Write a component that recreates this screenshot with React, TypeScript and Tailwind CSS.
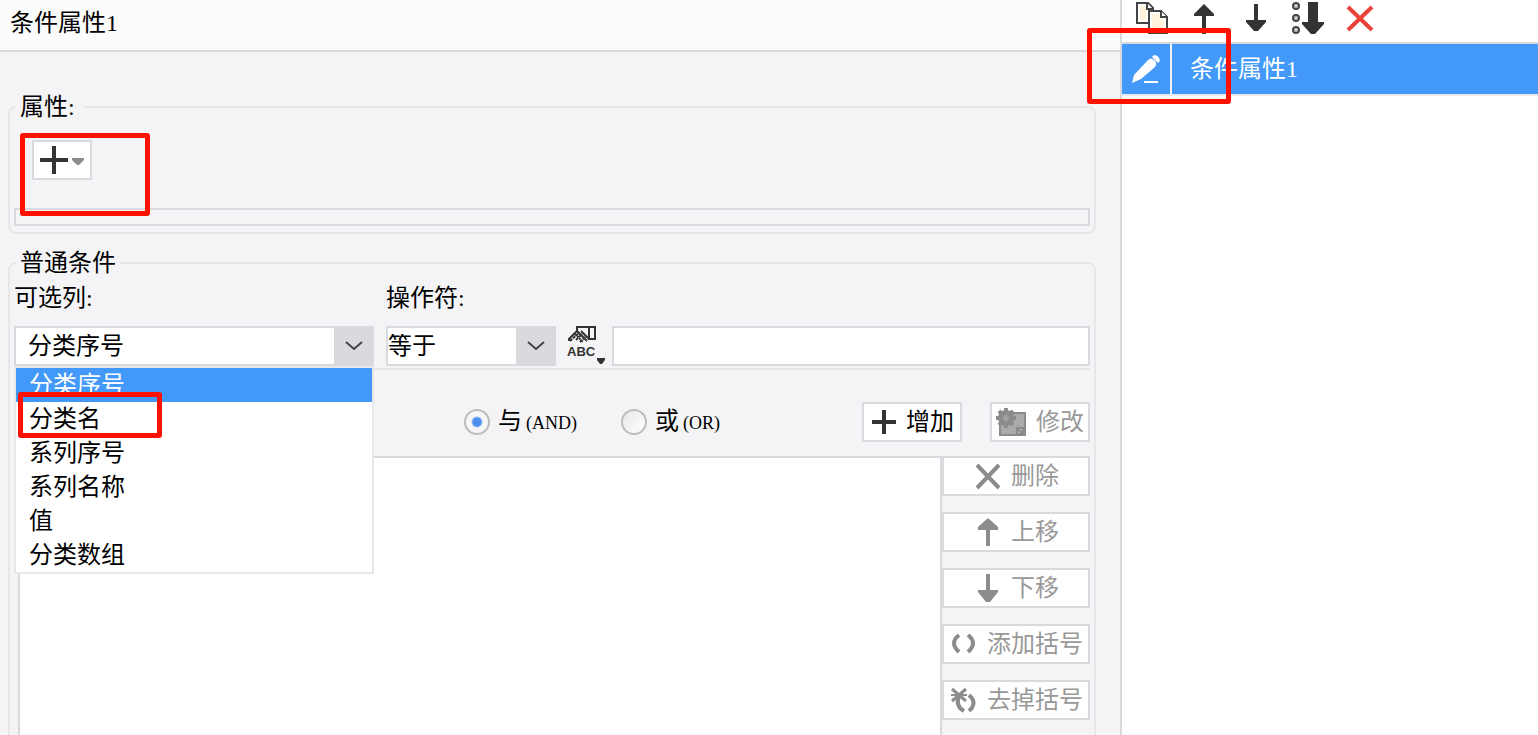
import { ReactNode, useState } from "react";

const columns = ["分类序号", "分类名", "系列序号", "系列名称", "值", "分类数组"];

const gearTeeth = [0, 45, 90, 135];

const ArrowUp = () => (
  <>
    <path d="M18 4 L28 14 V16 H8 V14 Z" />
    <path d="M16 12 h4 v22 h-4 z" />
  </>
);

const ArrowDown = () => (
  <>
    <path d="M16 4 h4 v18 h-4 z" />
    <path d="M8 20 H28 V22 L20 31 H16 L8 22 Z" />
  </>
);

const ToolButton = ({ label, children }: { label: string; children: ReactNode }) => (
  <button type="button" aria-label={label}>
    <svg width="36" height="36" viewBox="0 0 36 36" fill="#333" className="block">
      {children}
    </svg>
  </button>
);

type ActionProps = {
  label: string;
  icon: ReactNode;
  iconBox?: string;
  className?: string;
  disabled?: boolean;
};

const ActionButton = ({ label, icon, iconBox = "0 0 26 28", className = "", disabled }: ActionProps) => {
  const [, , w, h] = iconBox.split(" ");
  return (
    <button
      type="button"
      disabled={disabled}
      className={`flex h-10 shrink-0 items-center justify-center gap-2.5 border-2 border-[#d9dadd] bg-white whitespace-nowrap text-black disabled:text-[#999] ${className}`}
    >
      <svg width={w} height={h} viewBox={iconBox} className="shrink-0">
        {icon}
      </svg>
      {label}
    </button>
  );
};

const Chevron = () => (
  <span className="pointer-events-none absolute inset-y-0 right-0 flex w-10 items-center justify-center bg-[#d9dadd]">
    <svg width="20" height="12" viewBox="0 0 20 12" fill="none" stroke="#444" strokeWidth="2">
      <path d="M2 2 L10 9 L18 2" />
    </svg>
  </span>
);

const Highlight = ({ className }: { className: string }) => (
  <div className={`pointer-events-none absolute rounded-[3px] border-[5px] border-[#ff1100] ${className}`} />
);

const PropertyBox = () => (
  <fieldset className="mt-[43px] min-w-0 shrink-0 rounded-lg border-2 border-[#e7e7e9] px-1 pb-1.5">
    <legend className="ml-0.5 px-1 pr-2">属性:</legend>
    <div className="relative mt-[21px] ml-[18px] w-[60px]">
      <button
        type="button"
        aria-label="添加属性"
        className="flex h-10 w-full items-center border-2 border-[#d9dadd] bg-white pl-1.5"
      >
        <svg width="46" height="28" viewBox="0 0 46 28">
          <path d="M12 0h4v12h12v4H16v12h-4V16H0v-4h12z" fill="#333" />
          <path d="M32 12h12v2l-5 5h-2l-5-5z" fill="#8c8c8c" />
        </svg>
      </button>
      <Highlight className="-top-[7px] -left-3 h-[83px] w-[130px]" />
    </div>
    <div className="mt-7 h-[18px] border-2 border-[#d9dadd]" />
  </fieldset>
);

const ColumnSelect = () => {
  const [column, setColumn] = useState(columns[0]);
  return (
    <div className="flex w-[360px] shrink-0 flex-col gap-4">
      <label htmlFor="column">可选列:</label>
      <div className="relative">
        <select
          id="column"
          value={column}
          onChange={(e) => setColumn(e.target.value)}
          className="block h-10 w-full appearance-none border-2 border-[#d9dadd] bg-white pl-3"
        >
          {columns.map((c) => (
            <option key={c}>{c}</option>
          ))}
        </select>
        <Chevron />
        <div className="absolute top-full left-0 z-10 w-full">
          <ul role="listbox" aria-label="可选列" className="border-2 border-[#e7e7e9] bg-white">
            {columns.map((c) => (
              <li
                key={c}
                role="option"
                aria-selected={c === column}
                onClick={() => setColumn(c)}
                className="flex h-[34px] items-center pl-[13px] aria-selected:bg-[#4299f9] aria-selected:text-white"
              >
                {c}
              </li>
            ))}
          </ul>
          <Highlight className="top-[26px] left-1 h-[46px] w-36" />
        </div>
      </div>
    </div>
  );
};

const radioClass =
  "size-[26px] shrink-0 appearance-none rounded-full border-2 border-[#bdbdbd] bg-linear-to-br from-[#e8e8e8] to-white checked:bg-[radial-gradient(circle,#4a8ff0_0_4px,#f6f6f6_6px)]";

const ConditionBox = () => {
  const [join, setJoin] = useState("and");
  return (
    <fieldset className="mt-[17px] min-w-0 shrink-0 rounded-lg border-2 border-[#e7e7e9] px-1 pb-2">
      <legend className="ml-0.5 px-1">普通条件</legend>
      <div className="mt-[11px] flex items-end">
        <ColumnSelect />
        <div className="ml-3 flex w-[170px] shrink-0 flex-col gap-4">
          <label htmlFor="operator">操作符:</label>
          <div className="relative">
            <select
              id="operator"
              className="block h-10 w-full appearance-none border-2 border-[#d9dadd] bg-white"
            >
              <option>等于</option>
            </select>
            <Chevron />
          </div>
        </div>
        <button type="button" aria-label="值类型" className="w-14 shrink-0 pl-2.5">
          <svg width="40" height="40" viewBox="0 0 40 40" className="block">
            <g fill="none" stroke="#333" strokeWidth="2">
              <path d="M11 6 V1 H29 V13 H23 V1" />
              <path d="M11 5 L3 13 V15" />
              <path d="M11 5 L21 15" />
              <path d="M15 5 L23 13" />
              <path d="M9 8 L17 16" strokeDasharray="2 1" />
              <path d="M4 15 L13 7 M10 14 L16 8 M14 16 L20 10" strokeDasharray="3 1" />
            </g>
            <text
              x="1"
              y="30"
              fill="#333"
              className="font-['Liberation_Sans',sans-serif] text-[13px] font-bold"
            >
              ABC
            </text>
            <path d="M31 32h8v2l-3 4h-2l-3-4z" fill="#333" />
          </svg>
        </button>
        <input aria-label="值" className="h-10 min-w-0 flex-1 border-2 border-[#d9dadd] bg-white px-2" />
      </div>
      <div className="mt-0.5 flex items-center border-t-2 border-[#e7e7e9] pt-8 pl-[450px]">
        <label className="flex items-center gap-2 whitespace-nowrap">
          <input
            type="radio"
            name="join"
            checked={join === "and"}
            onChange={() => setJoin("and")}
            className={radioClass}
          />
          <span>
            与<span className="ml-1 text-lg leading-6">(AND)</span>
          </span>
        </label>
        <label className="ml-11 flex items-center gap-2 whitespace-nowrap">
          <input
            type="radio"
            name="join"
            checked={join === "or"}
            onChange={() => setJoin("or")}
            className={radioClass}
          />
          <span>
            或<span className="ml-1 text-lg leading-6">(OR)</span>
          </span>
        </label>
        <div className="ml-auto flex gap-7">
          <ActionButton
            label="增加"
            iconBox="0 0 24 24"
            className="w-[100px] pl-0.5"
            icon={<path d="M10 0h4v10h10v4H14v10h-4V14H0v-4h10z" fill="#333" />}
          />
          <ActionButton
            label="修改"
            iconBox="0 0 30 28"
            className="w-[100px]"
            disabled
            icon={
              <>
                <path d="M4 5H29V27H4z" fill="#aaa" stroke="#8c8c8c" strokeWidth="2" />
                <g stroke="#8c8c8c" strokeWidth="4">
                  {gearTeeth.map((a) => (
                    <path key={a} d="M10 0V20" transform={`rotate(${a} 10 10)`} />
                  ))}
                </g>
                <circle cx="10" cy="10" r="8" fill="#8c8c8c" />
                <circle cx="10" cy="10" r="3" fill="#a2a2a2" />
                <path d="M21 20h6v6h-6z M21 20l6 6" fill="#bbb" stroke="#8c8c8c" strokeWidth="2" />
              </>
            }
          />
        </div>
      </div>
      <div className="mt-3.5 flex">
        <div className="ml-1 h-80 flex-1 border-2 border-[#d9dadd] bg-white" />
        <div className="flex w-[148px] shrink-0 flex-col gap-4">
          <ActionButton
            label="删除"
            className="pl-0.5"
            disabled
            icon={<path d="M2 3 L24 26 M24 3 L2 26" fill="none" stroke="#8c8c8c" strokeWidth="4" />}
          />
          <ActionButton
            label="上移"
            className="pl-0.5"
            disabled
            icon={<path d="M13 0 L23 9 V12 H15 V28 H11 V12 H3 V9 Z" fill="#8c8c8c" />}
          />
          <ActionButton
            label="下移"
            className="pl-0.5"
            disabled
            icon={<path d="M11 0 H15 V16 H23 V18 L15 28 H11 L3 18 V16 H11 Z" fill="#8c8c8c" />}
          />
          <ActionButton
            label="添加括号"
            className="pl-0.5"
            disabled
            icon={
              <path
                d="M8 5 Q-2 13 8 22 M17 5 Q27 13 17 22"
                fill="none"
                stroke="#8c8c8c"
                strokeWidth="4"
              />
            }
          />
          <ActionButton
            label="去掉括号"
            className="pl-0.5"
            disabled
            icon={
              <g fill="none" stroke="#8c8c8c">
                <path d="M1 3 L15 15 M15 3 L1 15" strokeWidth="3" />
                <path d="M0 9 H16" strokeWidth="2" />
                <path d="M8 10 Q4 20 13 25 M18 9 Q27 17 18 25" strokeWidth="4" />
              </g>
            }
          />
        </div>
      </div>
    </fieldset>
  );
};

const ConditionList = () => (
  <aside className="relative w-[416px] shrink-0 bg-white">
    <div className="flex h-11 items-start gap-4 border-b-2 border-[#d9dadd] pl-3">
      <ToolButton label="复制">
        <g stroke="#444" strokeWidth="2" fill="#fff">
          <path d="M3 3 H14 L19 8 V23 H3 Z" />
          <path d="M6 6h6v14H6z" fill="#fff3dc" stroke="none" />
          <path d="M13 3 V9 H19" />
          <path d="M15 11 H27 L33 17 V33 H15 Z" />
          <path d="M18 14h7v5h5v12H18z" fill="#fff3dc" stroke="none" />
          <path d="M27 11 V17 H33" />
        </g>
      </ToolButton>
      <ToolButton label="上移条件">
        <ArrowUp />
      </ToolButton>
      <ToolButton label="下移条件">
        <ArrowDown />
      </ToolButton>
      <ToolButton label="排序">
        <g fill="#ccc" stroke="#444" strokeWidth="2">
          <circle cx="6" cy="6" r="3" />
          <circle cx="6" cy="18" r="3" />
          <circle cx="6" cy="30" r="3" />
        </g>
        <path d="M18 2 H28 V22 H34 V24 L25 34 H21 L12 24 V22 H18 Z" />
      </ToolButton>
      <ToolButton label="删除条件">
        <path d="M6 7 L30 30 M30 7 L6 30" fill="none" stroke="#ea4338" strokeWidth="4" />
      </ToolButton>
    </div>
    <div className="flex h-[52px] border-b-2 border-[#ececf0] bg-[#4299f9] text-white">
      <button type="button" aria-label="编辑" className="w-[50px] border-r-2 border-[#eef0f4] pl-2.5">
        <svg width="30" height="30" viewBox="0 0 30 30" fill="#fff">
          <path d="M0 29 L2 21 L16 6 Q19 3 22 6 Q26 9 23 13 L9 25 Z" />
          <path d="M20 3 L22 1 Q27 1 28 7 L26 9 Z" />
          <path d="M12 27h14v2H12z" />
        </svg>
      </button>
      <span className="self-center pl-[18px]">条件属性1</span>
    </div>
    <Highlight className="top-7 -left-[35px] h-[76px] w-36" />
  </aside>
);

export default function App() {
  return (
    <div className="flex h-screen overflow-hidden bg-[#f4f4f7] font-['Liberation_Serif','Noto_Sans_CJK_SC',sans-serif] text-2xl leading-6 text-black">
      <main className="flex min-w-0 flex-1 flex-col border-r-2 border-[#d9dadd]">
        <h1 className="flex h-[52px] shrink-0 items-center border-b-2 border-[#d9dadd] bg-[#fcfcfc] pb-1 pl-2.5">
          条件属性1
        </h1>
        <div className="flex flex-col pr-6 pl-2">
          <PropertyBox />
          <ConditionBox />
        </div>
      </main>
      <ConditionList />
    </div>
  );
}
